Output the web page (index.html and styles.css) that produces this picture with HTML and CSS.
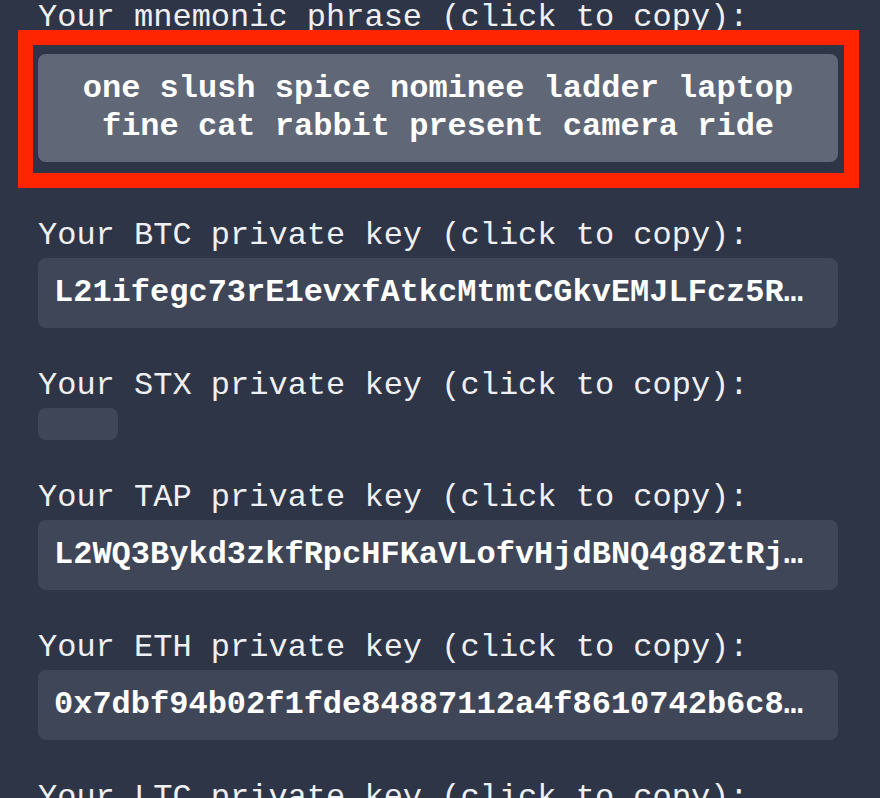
FILE: index.html
```html
<!DOCTYPE html>
<html lang="en">
<head>
<meta charset="utf-8">
<title>Keys</title>
<link rel="stylesheet" href="styles.css">
</head>
<body>
<main class="keys">
  <section class="field">
    <div class="label">Your mnemonic phrase (click to copy):</div>
    <div class="mnemonic-wrap">
      <div class="mnemonic">one slush spice nominee ladder laptop fine cat rabbit present camera ride</div>
      <div class="highlight"></div>
    </div>
  </section>
  <section class="field">
    <div class="label">Your BTC private key (click to copy):</div>
    <div class="key">L21ifegc73rE1evxfAtkcMtmtCGkvEMJLFcz5Rq8WnKpZ3xYbT7dHs</div>
  </section>
  <section class="field">
    <div class="label">Your STX private key (click to copy):</div>
    <div class="key empty"></div>
  </section>
  <section class="field">
    <div class="label">Your TAP private key (click to copy):</div>
    <div class="key">L2WQ3Bykd3zkfRpcHFKaVLofvHjdBNQ4g8ZtRjmX5cPwq9TfUe2vNa</div>
  </section>
  <section class="field">
    <div class="label">Your ETH private key (click to copy):</div>
    <div class="key">0x7dbf94b02f1fde84887112a4f8610742b6c8e3a91c05d7f2b4e6a8c0d1f3b5e7a9c2</div>
  </section>
  <section class="field">
    <div class="label">Your LTC private key (click to copy):</div>
    <div class="key">T8kPq3ZxWm2NvLr7YbHc4dFs9JtGe6UaQw1XnBy5RoKiMzVp3CfDh</div>
  </section>
</main>
</body>
</html>
```
FILE: styles.css
```css
html, body {
  margin: 0;
  padding: 0;
  background: #2e3547;
  overflow: hidden;
}

body {
  font-family: "Courier New", Courier, "Nimbus Mono PS", FreeMono, "Liberation Mono", monospace;
  font-size: 32px;
  line-height: 38px;
  color: #eef0f3;
}

.keys {
  width: 800px;
  margin: -1px 0 0 38px;
  display: flex;
  flex-direction: column;
  gap: 39px;
}

.field {
  display: flex;
  flex-direction: column;
  align-items: flex-start;
  gap: 3px;
}

.label {
  white-space: nowrap;
}

.mnemonic-wrap {
  position: relative;
  align-self: stretch;
  margin: 14px 0 16px;
}

.mnemonic {
  background: #606776;
  border-radius: 8px;
  padding: 16px;
  font-weight: bold;
  color: #ffffff;
  text-align: center;
}

.highlight {
  position: absolute;
  top: -24px;
  left: -20px;
  right: -21px;
  bottom: -26px;
  border: 15px solid #ff2500;
  pointer-events: none;
}

.key {
  box-sizing: border-box;
  max-width: 100%;
  background: #3e4657;
  border-radius: 8px;
  padding: 16px;
  font-weight: bold;
  color: #ffffff;
  white-space: nowrap;
  overflow: hidden;
  text-overflow: ellipsis;
}

.key.empty {
  width: 80px;
  height: 32px;
}
```
